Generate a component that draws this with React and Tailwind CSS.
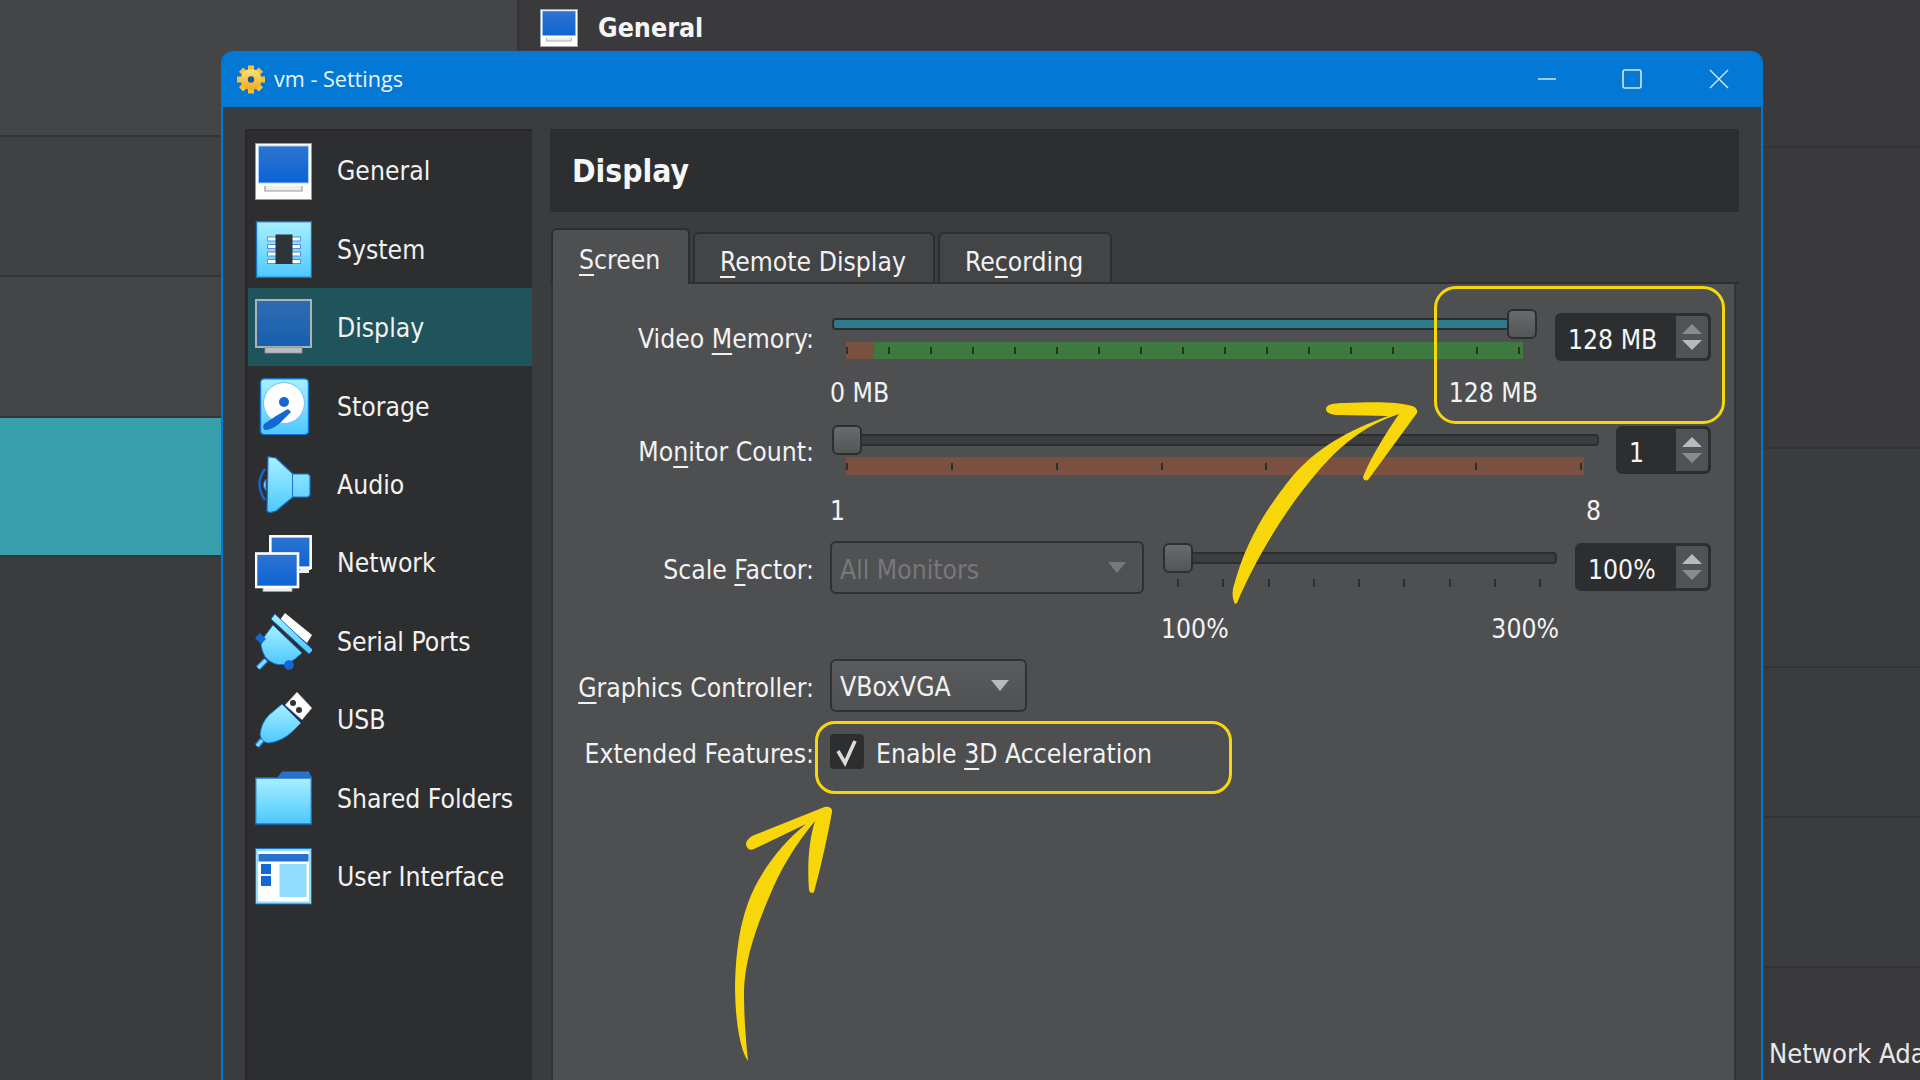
import React from "react";

const Defs = () => (
  <svg className="absolute w-0 h-0" aria-hidden="true">
    <defs>
      <linearGradient id="lb" x1="0" y1="0" x2="0" y2="1">
        <stop offset="0" stopColor="#a8f0ff" />
        <stop offset="1" stopColor="#4cc8ff" />
      </linearGradient>
      <linearGradient id="blue" x1="0" y1="0" x2="0" y2="1">
        <stop offset="0" stopColor="#2f74cf" />
        <stop offset="1" stopColor="#0c63d6" />
      </linearGradient>
      <linearGradient id="blueDim" x1="0" y1="0" x2="0" y2="1">
        <stop offset="0" stopColor="#2f6cb0" />
        <stop offset="1" stopColor="#1560b0" />
      </linearGradient>
      <linearGradient id="gold" x1="0" y1="0" x2="0" y2="1">
        <stop offset="0" stopColor="#ffe27a" />
        <stop offset="1" stopColor="#f2a81d" />
      </linearGradient>
    </defs>
  </svg>
);

const I = ({ children, small }) => (
  <svg viewBox="0 0 57 57" className={small ? "w-[38px] h-[38px] shrink-0" : "w-[57px] h-[57px] shrink-0"}>
    {children}
  </svg>
);

const IconGeneral = ({ small }) => (
  <I small={small}>
    <rect x="0.5" y="0.5" width="56" height="56" fill="#fff" stroke="#9a9a9a" />
    <rect x="3.5" y="3" width="50" height="37" fill="url(#blue)" stroke="#9fd0ff" />
    <path d="M10 43v5h37v-5" fill="#eee" stroke="#999" strokeWidth="1.2" />
  </I>
);
const IconSystem = () => (
  <I>
    <rect x="1.5" y="0.7" width="55" height="55.6" fill="url(#lb)" stroke="#1a70cf" strokeWidth="1.4" />
    {[18, 25.5, 33, 40.5].map((y) => (
      <g key={y}>
        <rect x="12.5" y={y - 2} width="33" height="4" fill="#fff" stroke="#5b8fdc" strokeWidth="1" />
      </g>
    ))}
    <rect x="20.5" y="13.5" width="17" height="29.5" fill="#2d343a" />
  </I>
);
const IconDisplay = () => (
  <I>
    <rect x="1" y="1" width="55" height="47" fill="url(#blueDim)" stroke="#aeb2b5" strokeWidth="2" />
    <rect x="10" y="48.5" width="37" height="5.5" fill="#b9bdbf" stroke="#8f9395" strokeWidth="0.8" />
  </I>
);
const IconStorage = () => (
  <I>
    <rect x="5.5" y="0.7" width="48" height="56" rx="4" fill="url(#lb)" stroke="#1a70cf" strokeWidth="1.4" />
    <circle cx="29" cy="25" r="20.5" fill="#fff" stroke="#6fc2f5" strokeWidth="1" />
    <circle cx="29" cy="24" r="5" fill="#1468d4" />
    <path d="M33 31l3 3-12 12q-8 6-14 6-3-2-1-6 11-8 24-15z" fill="#1468d4" />
  </I>
);
const IconAudio = () => (
  <I>
    <path d="M10 13Q-1 28 10 44" fill="none" stroke="#1468d4" strokeWidth="2.4" />
    <path d="M11 23Q6 29 11 35z" fill="url(#lb)" stroke="#1a70cf" />
    <path d="M13 0.7L21 2 38 18H53L55 20V39L53 41H38L21 55 15 56.7 12 55Z" fill="url(#lb)" stroke="#1a70cf" strokeWidth="1.2" strokeLinejoin="round" />
    <path d="M37.5 18V41" stroke="#1a70cf" strokeWidth="1" />
  </I>
);
const IconNetwork = () => (
  <I>
    <path d="M45 35h11v-2H45zM44 38h10v-3H44z" fill="#eee" />
    <rect x="14.5" y="0.5" width="42" height="33" fill="url(#blue)" stroke="#eee" strokeWidth="1" />
    <rect x="15.5" y="1.5" width="40" height="31" fill="none" stroke="#fff" strokeWidth="2.2" />
    <rect x="8" y="51" width="29" height="5.5" fill="#eee" stroke="#999" strokeWidth="0.8" />
    <rect x="1" y="18.5" width="42" height="33.5" fill="url(#blue)" stroke="#fff" strokeWidth="2.6" />
  </I>
);
const IconSerial = () => (
  <I>
    <path d="M30 0L57 22 52 30 25 7Z" fill="#fff" />
    <path d="M20 1L58 37 54 41 16 6Z" fill="url(#lb)" stroke="#1a70cf" strokeWidth="1" />
    <path d="M18 12L47 40 40 46Q28 55 18 50 8 46 6 32 8 24 12 20Z" fill="url(#lb)" stroke="#1a70cf" strokeWidth="1" />
    <path d="M5 20L11 26 6 31 0 25Z" fill="#1468d4" />
    <circle cx="34" cy="52" r="4.8" fill="#1468d4" />
    <path d="M11 47L3 55" stroke="#1a70cf" strokeWidth="6" />
    <path d="M11 47L3 55" stroke="#7fdcff" strokeWidth="3.6" />
  </I>
);
const IconUsb = () => (
  <I>
    <path d="M42 1L57 17 47 29 30 14Z" fill="#fff" stroke="#888" strokeWidth="0.6" />
    <circle cx="38" cy="12" r="3" fill="#333" />
    <circle cx="44" cy="19" r="3" fill="#333" />
    <path d="M27 13L46 32 38 40Q28 50 14 52 7 52 5 44 6 32 14 24Z" fill="url(#lb)" stroke="#1a70cf" strokeWidth="1" />
    <path d="M7 49L2 55" stroke="#1a70cf" strokeWidth="6" />
    <path d="M7 49L2 55" stroke="#7fdcff" strokeWidth="3.4" />
  </I>
);
const IconFolder = () => (
  <I>
    <path d="M22 8L27 1.5H54L57 8Z" fill="#2a70cf" />
    <rect x="0.7" y="8" width="55.6" height="46" fill="url(#lb)" stroke="#1a70cf" strokeWidth="1.4" />
  </I>
);
const IconUi = () => (
  <I>
    <rect x="0.7" y="0.7" width="55.6" height="55" fill="#fff" stroke="#1a70cf" strokeWidth="1.4" />
    <rect x="2" y="2" width="53" height="52.5" fill="none" stroke="#8fe0ff" strokeWidth="2" />
    <rect x="3.5" y="6" width="50" height="7.5" fill="#2a70cf" />
    <rect x="6" y="16" width="10" height="10" fill="#1468d4" />
    <rect x="6" y="28" width="10" height="10" fill="#1468d4" />
    <rect x="24.5" y="16" width="27" height="33" fill="#8fdcff" />
  </I>
);
const Gear = () => (
  <svg viewBox="0 0 28 29" className="w-[28px] h-[29px] shrink-0">
    {[0, 45, 90, 135, 180, 225, 270, 315].map((a) => (
      <rect key={a} x="11" y="0.5" width="6" height="7" fill="#f5c33a" transform={`rotate(${a} 14 14.5)`} />
    ))}
    <circle cx="14" cy="14.5" r="10.5" fill="url(#gold)" />
    <circle cx="14" cy="14.5" r="3.2" fill="#0d5c9c" />
  </svg>
);

const items = [
  ["General", <IconGeneral key="a" />],
  ["System", <IconSystem key="b" />],
  ["Display", <IconDisplay key="c" />],
  ["Storage", <IconStorage key="d" />],
  ["Audio", <IconAudio key="e" />],
  ["Network", <IconNetwork key="f" />],
  ["Serial Ports", <IconSerial key="g" />],
  ["USB", <IconUsb key="h" />],
  ["Shared Folders", <IconFolder key="i" />],
  ["User Interface", <IconUi key="j" />],
];

const U = ({ children }) => (
  <span className="underline decoration-[1.5px] underline-offset-[5px]">{children}</span>
);

const Arrow = ({ up, bright }) => (
  <svg viewBox="0 0 20 10" className="w-[20px] h-[10px]">
    <path d={up ? "M10 0L20 10H0Z" : "M0 0H20L10 10Z"} fill={bright ? "#b9babb" : "#8a8b8d"} />
  </svg>
);

const Spin = ({ value, width, mt, upBright, downBright }) => (
  <div className={`${width} ${mt} h-[48px] shrink-0 bg-[#2d2e30] rounded-md flex items-center justify-between pr-[3px]`}>
    <span className="pl-[13px] pt-[7px] text-[#f6f6f6]">{value}</span>
    <div className="w-[32px] h-[42px] bg-[#515254] rounded-r-sm flex flex-col items-center justify-center gap-[6px]">
      <Arrow up bright={upBright} />
      <Arrow bright={downBright} />
    </div>
  </div>
);

const Track = ({ width, thumbRight, teal }) => (
  <div className={`${width} h-[30px] relative flex items-center`}>
    <div className={`w-full h-[12px] rounded-sm border-2 border-[#2d2e30] ${teal ? "bg-[#2f7a88]" : "bg-[#3c3d3f]"}`} />
    <div className={`absolute top-0 ${thumbRight ? "right-0" : "left-0"} w-[30px] h-[30px] rounded-md border-2 border-[#2d2e30] bg-gradient-to-b from-[#686a6c] to-[#545557]`} />
  </div>
);

const Ticks = ({ n, tall }) =>
  Array.from({ length: n }, (_, i) => (
    <span key={i} className={`w-[2px] ${tall ? "h-[8px]" : "h-[7px]"} bg-[#2d2e30]`} />
  ));

const Row = ({ label, height, labelTop, children }) => (
  <div className={`flex ${height}`}>
    <div className={`w-[261px] shrink-0 text-right ${labelTop} h-[34px] leading-[34px] whitespace-nowrap`}>{label}</div>
    <div className="ml-[16px] w-[881px] flex">{children}</div>
  </div>
);

const Combo = ({ width, disabled, pt, children }) => (
  <div
    className={`${width} h-[53px] shrink-0 rounded-md border-2 border-[#303133] flex items-center justify-between pl-[8px] pr-[16px] ${
      disabled ? "bg-[#505153] text-[#77787a]" : "bg-gradient-to-b from-[#5a5b5d] to-[#505153]"
    }`}
  >
    <span className={pt}>{children}</span>
    <svg viewBox="0 0 20 12" className="w-[18px] h-[11px]">
      <path d="M0 0H20L10 12Z" fill={disabled ? "#77787a" : "#b9babb"} />
    </svg>
  </div>
);

export default function App() {
  return (
    <div className="relative w-[1920px] h-[1080px] overflow-hidden bg-[#3b3c3e] text-[26.3px] text-[#f2f2f2] font-['DejaVu_Sans_Condensed','DejaVu_Sans',sans-serif] [font-stretch:condensed]">
      <Defs />

      {/* application behind the dialog */}
      <div className="flex w-full h-full">
        <div className="w-[519px] shrink-0 flex flex-col border-r-2 border-[#333436]">
          <div className="h-[137px] bg-[#444547] border-b-2 border-[#343537]" />
          <div className="h-[140px] bg-[#404143] border-b-2 border-[#343537]" />
          <div className="h-[141px] bg-[#434446] border-b-2 border-[#343537]" />
          <div className="h-[137px] bg-gradient-to-r from-[#379eac] from-80% to-[#2f8593]" />
          <div className="flex-1 bg-[#3a3b3d] border-t-2 border-[#343537]" />
        </div>
        <div className="flex-1 flex flex-col bg-[#3a3a3c]">
          <div className="h-[148px] border-b-2 border-[#333436] flex items-start pl-[21px] pt-[9px] gap-[20px]">
            <IconGeneral small />
            <span className="font-bold text-[26.6px] leading-[38px] text-[#f5f5f5]">General</span>
          </div>
          <div className="h-[301px] border-b-2 border-[#333436]" />
          <div className="h-[219px] border-b-2 border-[#333436] bg-[#3b3c3e]" />
          <div className="h-[150px] border-b-2 border-[#333436] bg-[#3b3c3e]" />
          <div className="h-[150px] border-b-2 border-[#333436] bg-[#3b3c3e]" />
          <div className="flex-1 pl-[1250px] pt-[68px] whitespace-nowrap overflow-hidden text-[27.2px] leading-[36px] text-[#e8e8e8]">Network Ada</div>
        </div>
      </div>

      {/* the dialog */}
      <div className="absolute left-[221px] top-[51px] w-[1542px] h-[1029px] flex flex-col rounded-t-[12px] overflow-hidden border-x-2 border-[#0078d4] bg-[#3b3c3e]">
        <div className="h-[56px] shrink-0 bg-[#0378d5] flex items-center pl-[14px] text-[#eaf3fb]">
          <Gear />
          <span className="ml-[9px] text-[21.6px] font-['Open_Sans',sans-serif] [font-stretch:normal]">vm - Settings</span>
          <div className="ml-auto flex items-center text-[#d5e7f6]">
            <svg viewBox="0 0 20 20" className="w-[20px] h-[20px]">
              <path d="M1 10H19" stroke="currentColor" strokeWidth="1.3" />
            </svg>
            <svg viewBox="0 0 20 20" className="w-[20px] h-[20px] ml-[65px]">
              <rect x="1" y="1" width="18" height="18" rx="2" fill="none" stroke="currentColor" strokeWidth="1.6" />
            </svg>
            <svg viewBox="0 0 20 20" className="w-[20px] h-[20px] ml-[67px] mr-[32px]">
              <path d="M1 1L19 19M19 1L1 19" stroke="currentColor" strokeWidth="1.4" />
            </svg>
          </div>
        </div>

        <div className="flex-1 min-h-0 flex pl-[22px] pt-[22px] gap-[18px]">
          <div className="w-[287px] shrink-0 bg-[#2d2e30] border-l-2 border-t-2 border-[#29292b] pl-[1px]">
            {items.map(([name, icon]) => (
              <div
                key={name}
                className={`h-[78.4px] flex items-center pl-[7px] pt-[2px] gap-[25px] whitespace-nowrap ${
                  name === "Display" ? "bg-[#1f545c]" : ""
                }`}
              >
                {icon}
                <span className="pt-[2px]">{name}</span>
              </div>
            ))}
          </div>

          <div className="w-[1189px] shrink-0 flex flex-col">
            <div className="h-[83px] shrink-0 bg-[#2d2e30] flex items-center pl-[22px] pt-[2px] font-bold text-[31.6px] text-[#f6f6f6]">
              Display
            </div>

            <div className="mt-[16px] h-[56px] shrink-0 flex items-end pl-[1px] gap-[3px] border-b-2 border-[#2d2e30]">
              <div className="w-[139px] h-[56px] -mb-[2px] relative bg-[#4e4f51] border-x-2 border-t-2 border-[#2d2e30] rounded-t-md pl-[26px] leading-[60px]">
                <U>S</U>creen
              </div>
              <div className="w-[242px] h-[50px] bg-[#434446] border-x-2 border-t-2 border-[#2d2e30] rounded-t-md pl-[25px] leading-[57px]">
                <U>R</U>emote Display
              </div>
              <div className="w-[174px] h-[50px] bg-[#434446] border-x-2 border-t-2 border-[#2d2e30] rounded-t-md pl-[25px] leading-[57px]">
                Re<U>c</U>ording
              </div>
            </div>

            <div className="flex-1 mr-[3px] ml-[1px] bg-[#4e4f51] border-x-2 border-[#333436] pt-[25px]">
              <Row label={<>Video <U>M</U>emory:</>} height="h-[116px]" labelTop="mt-[13px]">
                <div className="w-[725px] shrink-0 flex flex-col">
                  <div className="ml-[2px]">
                    <Track width="w-[705px]" thumbRight teal />
                  </div>
                  <div className="ml-[16px] mt-[3px] w-[677px] h-[17px] flex items-center justify-between pr-[3px] bg-[linear-gradient(90deg,#7a5040_28px,#3e7a3f_28px)]">
                    <Ticks n={17} />
                  </div>
                  <div className="mt-[17px] w-[708px] h-[34px] leading-[34px] flex justify-between">
                    <span>0 MB</span>
                    <span>128 MB</span>
                  </div>
                </div>
                <Spin value="128 MB" width="w-[156px]" mt="mt-[4px]" downBright />
              </Row>

              <Row label={<>Mo<U>n</U>itor Count:</>} height="h-[116px]" labelTop="mt-[10px]">
                <div className="w-[786px] shrink-0 flex flex-col">
                  <div className="ml-[2px]">
                    <Track width="w-[767px]" />
                  </div>
                  <div className="ml-[16px] mt-[2px] w-[738px] h-[18px] flex items-center justify-between pr-[2px] bg-[#7a5040]">
                    <Ticks n={8} />
                  </div>
                  <div className="mt-[19px] w-[771px] h-[34px] leading-[34px] flex justify-between">
                    <span>1</span>
                    <span>8</span>
                  </div>
                </div>
                <Spin value="1" width="w-[95px]" mt="mt-[1px]" upBright />
              </Row>

              <Row label={<>Scale <U>F</U>actor:</>} height="h-[118px]" labelTop="mt-[12px]">
                <Combo width="w-[314px]" disabled pt="pt-[6px]">All Monitors</Combo>
                <div className="ml-[19px] w-[412px] shrink-0 flex flex-col pt-[2px]">
                  <Track width="w-[394px]" />
                  <div className="ml-[14px] mt-[5px] w-[364px] h-[9px] flex items-center justify-between">
                    <Ticks n={9} tall />
                  </div>
                  <div className="mt-[25px] -ml-[2px] w-[398px] h-[34px] leading-[34px] flex justify-between">
                    <span>100%</span>
                    <span>300%</span>
                  </div>
                </div>
                <Spin value="100%" width="w-[136px]" mt="mt-[2px]" upBright />
              </Row>

              <Row label={<><U>G</U>raphics Controller:</>} height="h-[75px]" labelTop="mt-[12px]">
                <Combo width="w-[197px]" pt="pt-[4px]">VBoxVGA</Combo>
              </Row>

              <Row label="Extended Features:" height="h-[40px]" labelTop="mt-[3px]">
                <div className="w-[34px] h-[35px] bg-[#2d2e30] rounded-sm shrink-0">
                  <svg viewBox="0 0 34 35" className="w-[34px] h-[35px]">
                    <path d="M8 17L15 29 25 7" fill="none" stroke="#dcdcdc" strokeWidth="3.6" />
                  </svg>
                </div>
                <span className="ml-[12px] mt-[3px] h-[34px] leading-[34px] whitespace-nowrap">
                  Enable <U>3</U>D Acceleration
                </span>
              </Row>
            </div>
          </div>
        </div>
      </div>

      {/* annotations drawn over the dialog */}
      <div className="absolute left-[1434px] top-[286px] w-[291px] h-[138px] rounded-[22px] border-[3px] border-[#f7d70a]" />
      <div className="absolute left-[815px] top-[721px] w-[417px] h-[73px] rounded-[20px] border-[3px] border-[#f7d70a]" />
      <svg viewBox="0 0 1920 1080" className="absolute left-0 top-0 w-[1920px] h-[1080px] pointer-events-none">
        <path
          fill="#f7d70a"
          d="M1235 604C1232 598 1232 592 1234 585C1245 545 1262 515 1287 483C1315 447 1350 430 1388 416L1340 415C1332 415 1326 413 1326 409C1326 405 1332 403 1345 403C1370 402 1395 401 1412 406C1416 407 1418 410 1417 413L1368 480C1366 481 1363 480 1363 477C1372 455 1385 435 1399 414C1365 425 1340 445 1315 475C1285 510 1255 560 1237 603Z"
        />
        <path
          fill="#f7d70a"
          d="M748 1061C740 1050 735 1020 735 984C736 950 740 925 748 903C758 875 780 845 806 824L754 849C749 851 746 848 746 843C747 840 749 838 752 836L822 808C828 805 833 808 832 812C827 840 820 870 814 892C812 894 810 893 809 890C807 865 809 840 815 821C795 845 780 870 770 895C755 930 745 960 744 990C744 1020 746 1040 748 1061Z"
        />
      </svg>
    </div>
  );
}
